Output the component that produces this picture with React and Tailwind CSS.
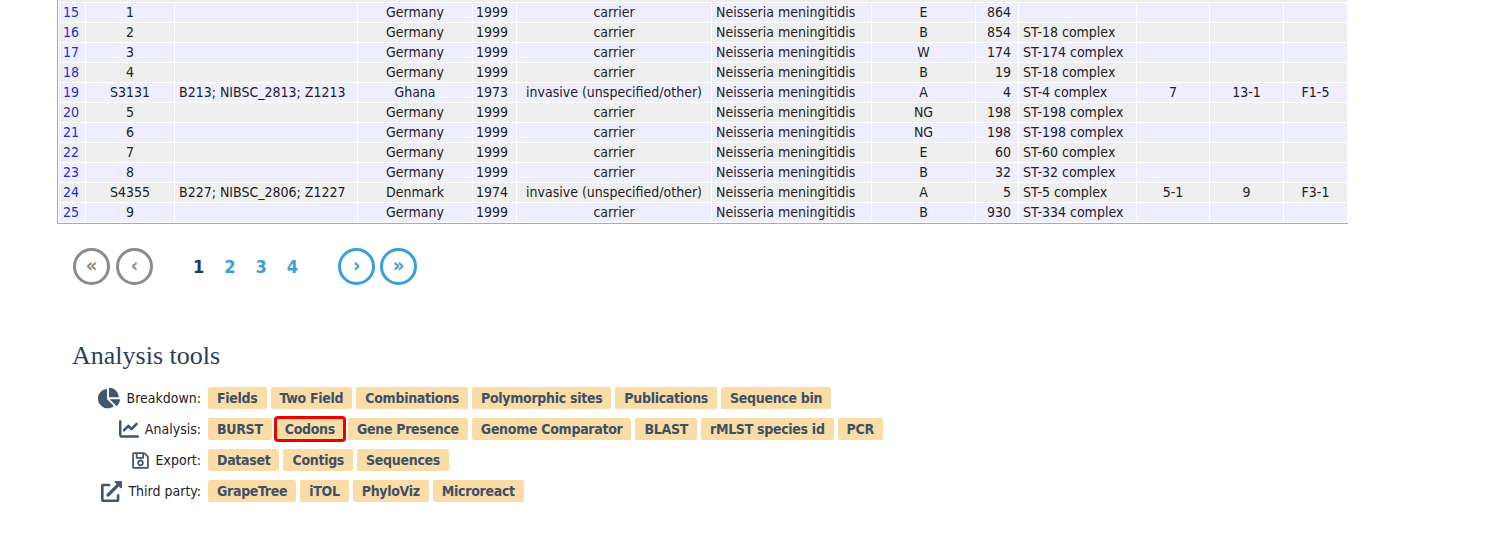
import React from "react";
import { FaChartPie, FaRegSave, FaExternalLinkAlt } from "react-icons/fa";
import { FaChartLine } from "react-icons/fa6";

const rows = [
  ["15","1","","Germany","1999","carrier","E","864","","","",""],
  ["16","2","","Germany","1999","carrier","B","854","ST-18 complex","","",""],
  ["17","3","","Germany","1999","carrier","W","174","ST-174 complex","","",""],
  ["18","4","","Germany","1999","carrier","B","19","ST-18 complex","","",""],
  ["19","S3131","B213; NIBSC_2813; Z1213","Ghana","1973","invasive (unspecified/other)","A","4","ST-4 complex","7","13-1","F1-5"],
  ["20","5","","Germany","1999","carrier","NG","198","ST-198 complex","","",""],
  ["21","6","","Germany","1999","carrier","NG","198","ST-198 complex","","",""],
  ["22","7","","Germany","1999","carrier","E","60","ST-60 complex","","",""],
  ["23","8","","Germany","1999","carrier","B","32","ST-32 complex","","",""],
  ["24","S4355","B227; NIBSC_2806; Z1227","Denmark","1974","invasive (unspecified/other)","A","5","ST-5 complex","5-1","9","F3-1"],
  ["25","9","","Germany","1999","carrier","B","930","ST-334 complex","","",""],
];
const widths = [27,89,183,115,44,195,160,104,43,118,73,74,64];

function Btn({ children, red }) {
  return (
    <span className={"inline-flex items-center h-[22px] px-[9px] bg-[#f9dca6] text-[#3e5068] font-bold text-[14px] tracking-[-0.3px] rounded-[2px] " + (red ? "outline-[3px] outline outline-[#ee0000] -outline-offset-[1px]" : "")}>
      {children}
    </span>
  );
}

function Row({ icon, label, items }) {
  return (
    <div className="flex items-center h-[31px]">
      <div className="w-[136px] flex items-center justify-end gap-[6px] pr-[7px] text-[#222] text-[14px]">
        <span className="text-[#44566c]">{icon}</span>
        <span>{label}</span>
      </div>
      <div className="flex gap-[4px]">
        {items.map((t) => <Btn key={t} red={t === "Codons"}>{t}</Btn>)}
      </div>
    </div>
  );
}

function Circle({ blue, children }) {
  return (
    <div className={"w-[37px] h-[37px] rounded-full border-[3px] flex items-center justify-center font-bold text-[20px] leading-none pb-[3px] " + (blue ? "border-[#3a9fdc] text-[#3a9fdc]" : "border-[#8c8c8c] text-[#8c8c8c]")}>
      {children}
    </div>
  );
}

const td = "border border-white p-0 h-[20px] leading-[19px] whitespace-nowrap overflow-hidden";

export default function App() {
  return (
    <div className="w-[1497px] h-[533px] bg-white overflow-hidden" style={{ fontFamily: '"DejaVu Sans Condensed","Liberation Sans Narrow","Open Sans",sans-serif' }}>
      <div className="ml-[57px] w-[1291px] border border-[#aaa] border-t-0">
        <table className="border-collapse text-[14px] text-[#222] table-fixed w-[1289px]">
          <colgroup>
            {widths.map((w, i) => <col key={i} style={{ width: w }} />)}
          </colgroup>
          <tbody>
            <tr className="h-[2px] bg-[#eeeeee]"><td colSpan={13} className="p-0 h-[2px]"></td></tr>
            {rows.map((r, i) => (
              <tr key={r[0]} className={i % 2 === 0 ? "bg-[#eeeeff]" : "bg-[#eeeeee]"}>
                <td className={td + " px-[4px] text-[#1a2ed0]"}>{r[0]}</td>
                <td className={td + " text-center"}>{r[1]}</td>
                <td className={td + " px-[4px]"}>{r[2]}</td>
                <td className={td + " text-center"}>{r[3]}</td>
                <td className={td + " px-[3px]"}>{r[4]}</td>
                <td className={td + " text-center"}>{r[5]}</td>
                <td className={td + " px-[4px]"}>Neisseria meningitidis</td>
                <td className={td + " text-center"}>{r[6]}</td>
                <td className={td + " text-right pr-[7px]"}>{r[7]}</td>
                <td className={td + " px-[4px]"}>{r[8]}</td>
                <td className={td + " text-center"}>{r[9]}</td>
                <td className={td + " text-center"}>{r[10]}</td>
                <td className={td + " text-center"}>{r[11]}</td>
              </tr>
            ))}
          </tbody>
        </table>
      </div>

      <div className="flex items-center ml-[73px] mt-[24px]">
        <Circle>«</Circle>
        <div className="ml-[6px]"><Circle>‹</Circle></div>
        <div className="flex gap-[20px] ml-[40px] text-[18px] font-bold">
          <span className="text-[#1f3a5c]">1</span>
          <span className="text-[#3a9fdc]">2</span>
          <span className="text-[#3a9fdc]">3</span>
          <span className="text-[#3a9fdc]">4</span>
        </div>
        <div className="ml-[40px]"><Circle blue>›</Circle></div>
        <div className="ml-[5px]"><Circle blue>»</Circle></div>
      </div>

      <div className="ml-[72px] mt-[56px] text-[26px] text-[#2c3e58] leading-[30px]" style={{ fontFamily: '"Liberation Serif",serif' }}>Analysis tools</div>
      <div className="ml-[72px] mt-[12px]">
        <Row icon={<FaChartPie size={22} />} label="Breakdown:" items={["Fields","Two Field","Combinations","Polymorphic sites","Publications","Sequence bin"]} />
        <Row icon={<FaChartLine size={20} />} label="Analysis:" items={["BURST","Codons","Gene Presence","Genome Comparator","BLAST","rMLST species id","PCR"]} />
        <Row icon={<FaRegSave size={19} />} label="Export:" items={["Dataset","Contigs","Sequences"]} />
        <Row icon={<FaExternalLinkAlt size={21} />} label="Third party:" items={["GrapeTree","iTOL","PhyloViz","Microreact"]} />
      </div>
    </div>
  );
}
